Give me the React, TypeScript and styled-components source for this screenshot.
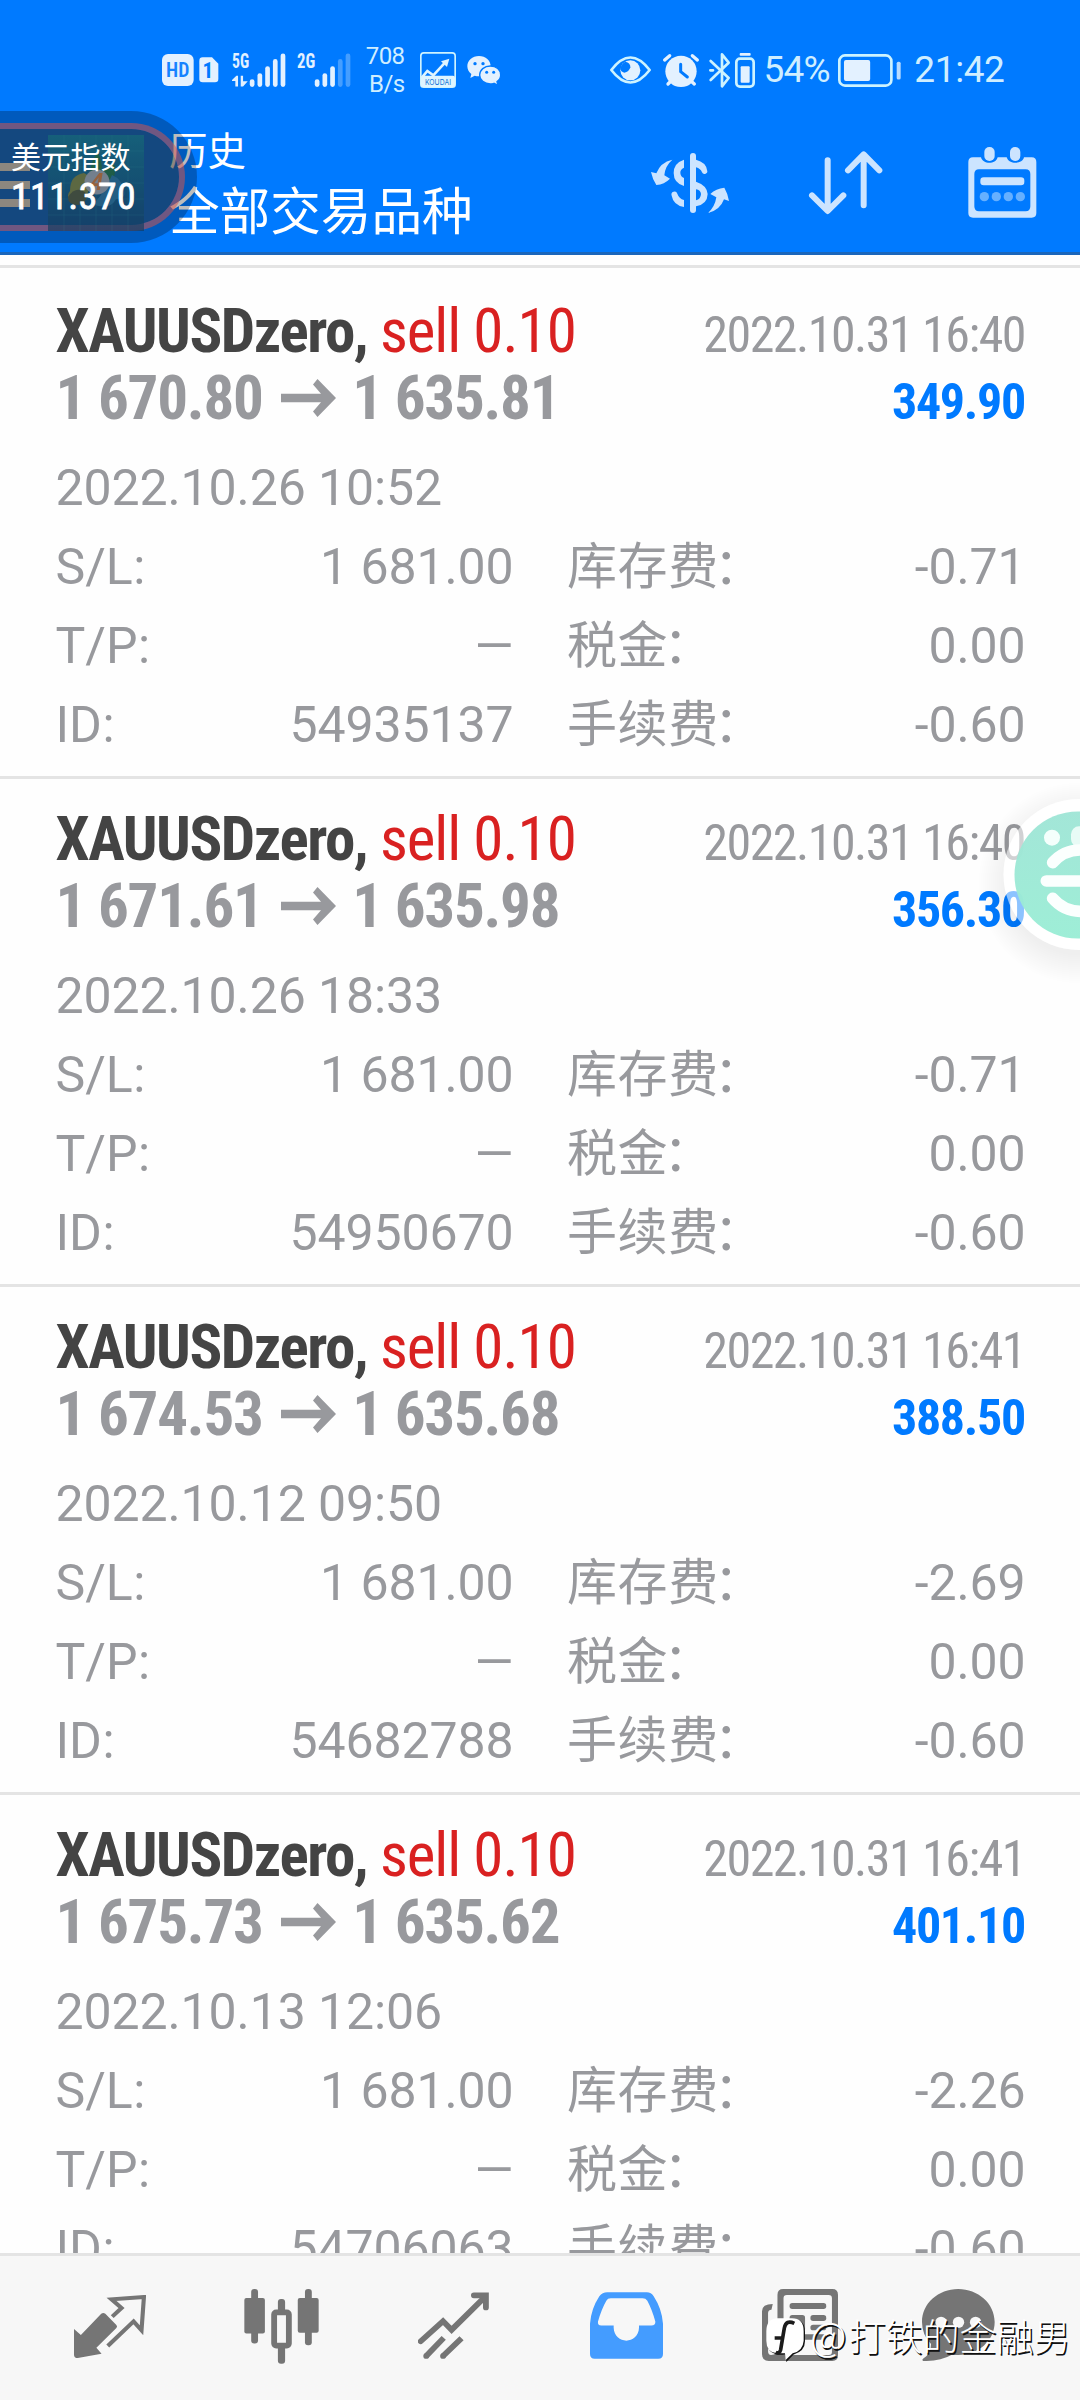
import React from "react";
import styled, { createGlobalStyle } from "styled-components";

const SANS = `Roboto, "Noto Sans CJK SC", sans-serif`;
const CONDENSED = `"Roboto Condensed", Roboto, "Noto Sans CJK SC", sans-serif`;

const GlobalStyle = createGlobalStyle`
  * { box-sizing: border-box; }
  body { margin: 0; background: #fff; }
`;

const Screen = styled.div`
  position: relative;
  display: flex;
  flex-direction: column;
  width: 1080px;
  height: 2400px;
  overflow: hidden;
  background: #fefefe;
  font-family: ${SANS};
`;

/* ---------- header ---------- */

const Header = styled.header`
  flex: none;
  height: 255px;
  background: #007aff;
  border-bottom: 3px solid #1a66bb;
`;

const StatusBar = styled.div`
  display: flex;
  justify-content: space-between;
  height: 111px;
  padding: 30px 75.5px 0 158.5px;
`;

const StatusGroup = styled.div`
  display: flex;
  align-items: center;
  height: 80px;
`;

const Glyph = styled.svg<{ $gap?: number }>`
  display: block;
  flex: none;
  margin-left: ${(p) => p.$gap ?? 0}px;
  overflow: visible;
`;

const NetSpeed = styled.div`
  margin-left: 15px;
  width: 40px;
  text-align: right;
  font-size: 24px;
  line-height: 28.5px;
  color: #cfeeff;
  letter-spacing: -0.6px;
`;

const StatusText = styled.span<{ $gap: number; $spacing?: number }>`
  margin-left: ${(p) => p.$gap}px;
  font-size: 37px;
  line-height: 44px;
  color: #cfeeff;
  letter-spacing: ${(p) => p.$spacing ?? 0}px;
`;

const AppBar = styled.div`
  display: flex;
  height: 141px;
  padding-right: 44px;
`;

const MenuButton = styled.div`
  display: flex;
  flex-direction: column;
  gap: 10px;
  width: 30px;
  padding-top: 52px;
`;

const MenuLine = styled.span`
  height: 8px;
  background: #fff;
`;

const Titles = styled.div`
  flex: 1;
  margin-left: 139px;
  padding-top: 17px;
  color: #fff;
`;

const Subtitle = styled.div`
  font-size: 38.5px;
  line-height: 48px;
`;

const Title = styled.div`
  font-size: 50.6px;
  line-height: 70px;
  margin-top: 2px;
`;

const Actions = styled.div`
  display: flex;
  align-items: center;
  height: 143px;
`;

/* ---------- history list ---------- */

const List = styled.main`
  flex: 1;
  min-height: 0;
  overflow: hidden;
  padding-top: 10px;
`;

const ListTop = styled.div`
  height: 6px;
  border-top: 3px solid #e4e4e4;
`;

const Item = styled.article`
  height: 508px;
  padding: 27px 54px 0 55.5px;
  border-bottom: 3px solid #e4e4e4;
`;

const Line = styled.div`
  display: flex;
  justify-content: space-between;
  align-items: baseline;
  height: 67px;
  line-height: 67px;
  font-family: ${CONDENSED};
`;

const Symbol = styled.div`
  font-size: 61px;
  font-weight: 700;
  letter-spacing: -1.45px;
  color: #444;
  white-space: pre;
`;

const Side = styled.span`
  font-weight: 400;
  letter-spacing: -1px;
  color: #d92121;
`;

const CloseTime = styled.div`
  margin-right: 1px;
  font-size: 50px;
  letter-spacing: -1.5px;
  color: #98999d;
`;

const Prices = styled.div`
  display: flex;
  align-items: baseline;
  font-size: 61px;
  font-weight: 700;
  letter-spacing: -1.2px;
  color: #98999d;
`;

const PriceArrow = styled.svg`
  margin: 0 16px 0 18.5px;
  transform: translateY(-2px);
`;

const Profit = styled.div`
  margin-right: 1px;
  font-size: 50px;
  font-weight: 700;
  letter-spacing: -1.3px;
  color: #007aff;
`;

const Details = styled.div`
  display: grid;
  grid-template-columns: 458px 458.5px;
  column-gap: 53.5px;
  grid-auto-rows: 79px;
  margin-top: 17px;
  font-size: 50px;
  line-height: 79px;
  letter-spacing: -0.1px;
  color: #98999d;
`;

const OpenTime = styled.div`
  grid-column: 1 / -1;
`;

const Field = styled.div`
  display: flex;
  justify-content: space-between;
`;

const Label = styled.span<{ $wide: boolean }>`
  letter-spacing: ${(p) => (p.$wide ? 0.6 : 0)}px;
`;

const Colon = styled.span<{ $wide: boolean }>`
  margin-left: ${(p) => (p.$wide ? -5 : 0.5)}px;
`;

type Deal = {
  id: string; closed: string; opened: string;
  from: string; to: string; profit: string; swap: string;
};

const deals: Deal[] = [
  { id: "54935137", closed: "2022.10.31 16:40", opened: "2022.10.26 10:52", from: "1 670.80", to: "1 635.81", profit: "349.90", swap: "-0.71" },
  { id: "54950670", closed: "2022.10.31 16:40", opened: "2022.10.26 18:33", from: "1 671.61", to: "1 635.98", profit: "356.30", swap: "-0.71" },
  { id: "54682788", closed: "2022.10.31 16:41", opened: "2022.10.12 09:50", from: "1 674.53", to: "1 635.68", profit: "388.50", swap: "-2.69" },
  { id: "54706063", closed: "2022.10.31 16:41", opened: "2022.10.13 12:06", from: "1 675.73", to: "1 635.62", profit: "401.10", swap: "-2.26" },
];

function DealItem({ deal }: { deal: Deal }) {
  const fields = [
    ["S/L", ":", "1 681.00"], ["库存费", "：", deal.swap],
    ["T/P", ":", "—"], ["税金", "：", "0.00"],
    ["ID", ":", deal.id], ["手续费", "：", "-0.60"],
  ];
  return (
    <Item>
      <Line>
        <Symbol>XAUUSDzero, <Side>sell 0.10</Side></Symbol>
        <CloseTime>{deal.closed}</CloseTime>
      </Line>
      <Line>
        <Prices>
          <span>{deal.from}</span>
          <PriceArrow width="55" height="38" viewBox="0 0 55 38">
            <path d="M0 14.8H40L32 5.5L36.5 0L55 19L36.5 38L32 32.5L40 23.2H0Z" fill="#98999d" />
          </PriceArrow>
          <span>{deal.to}</span>
        </Prices>
        <Profit>{deal.profit}</Profit>
      </Line>
      <Details>
        <OpenTime>{deal.opened}</OpenTime>
        {fields.map(([label, colon, value]) => (
          <Field key={label}>
            <Label $wide={colon === "："}>{label}<Colon $wide={colon === "："}>{colon}</Colon></Label>
            <span>{value}</span>
          </Field>
        ))}
      </Details>
    </Item>
  );
}

/* ---------- bottom navigation ---------- */

const NavBar = styled.nav`
  flex: none;
  display: flex;
  align-items: flex-start;
  height: 147px;
  padding: 33px 0 0 74px;
  background: #f7f7f7;
  border-top: 3px solid #e4e4e4;
`;

const NavIcon = styled.svg<{ $gap?: number; $drop?: number }>`
  flex: none;
  margin: ${(p) => p.$drop ?? 0}px 0 0 ${(p) => p.$gap ?? 0}px;
`;

/* ---------- floating widgets ---------- */

const IndexWidget = styled.aside`
  position: absolute;
  left: -70px;
  top: 111px;
  width: 267px;
  height: 132px;
  padding: 12px;
  border-radius: 66px;
  background: rgba(0, 0, 0, 0.26);
`;

const IndexBody = styled.div`
  position: relative;
  height: 108px;
  border: 6px solid rgba(215, 85, 75, 0.52);
  border-radius: 54px;
  background: rgba(55, 40, 19, 0.365);
  background-clip: padding-box;
`;

const AppLogo = styled.svg`
  position: absolute;
  left: 100px;
  top: 6px;
  opacity: 0.8;
`;

const IndexText = styled.div`
  position: relative;
  padding: 12px 0 0 63px;
  color: #fff;
`;

const IndexName = styled.div`
  font-size: 30px;
  line-height: 34px;
  letter-spacing: -0.2px;
  white-space: nowrap;
`;

const IndexValue = styled.div`
  font-family: ${CONDENSED};
  font-size: 37.5px;
  line-height: 42px;
  letter-spacing: 0.6px;
  -webkit-text-stroke: 0.8px #fff;
`;

const Assistant = styled.svg`
  position: absolute;
  left: 975px;
  top: 770px;
`;

const Watermark = styled.div`
  position: absolute;
  left: 766px;
  top: 2318px;
  display: flex;
  align-items: flex-start;
  gap: 4px;
  font-family: "Noto Sans CJK SC", sans-serif;
  font-weight: 300;
  font-size: 37px;
  line-height: 33px;
  color: #fff;
  white-space: nowrap;
  text-shadow: 1.5px 1.5px 0.5px #111;
`;

const At = styled.span`
  display: inline-block;
  width: 38.5px;
  font-size: 40px;
`;

const ICE = "#e3f1ff";
const PALE = "#cce4ff";
const GRAY = "#757575";

function Bars({ x, tops, faded = 0 }: { x: number; tops: number[]; faded?: number }) {
  return (
    <>
      {tops.map((t, i) => (
        <rect key={i} x={x + i * 23} y={t} width="14" height={163 - t} rx="7" fill={ICE}
          opacity={i >= tops.length - faded ? 0.3 : 1} />
      ))}
    </>
  );
}

export default function App() {
  return (
    <Screen>
      <GlobalStyle />
      <Header>
        <StatusBar>
          <StatusGroup>
            <Glyph width="57" height="32" viewBox="65 68 171 96" $gap={3}>
              <rect x="65" y="68" width="95" height="96" rx="18" fill={ICE} />
              <text x="112" y="138" textAnchor="middle" fontFamily="Roboto Condensed" fontWeight="600" fontSize="60" textLength="70" lengthAdjust="spacingAndGlyphs" fill="#1683ff">HD</text>
              <path d="M187 78H215L234 97V143Q234 153 224 153H187Q177 153 177 143V88Q177 78 187 78Z" fill={ICE} />
              <text x="203" y="140" textAnchor="middle" fontFamily="Roboto Condensed" fontWeight="700" fontSize="64" fill="#007aff">1</text>
            </Glyph>
            <Glyph width="53" height="34" viewBox="277 62 158 101" $gap={13}>
              <text x="277" y="107" fontFamily="Roboto Condensed" fontWeight="700" fontSize="60" textLength="51" lengthAdjust="spacingAndGlyphs" fill={ICE}>5G</text>
              <path d="M277 142L290 130H295V162H287V145H277ZM303 130H310V146H324L310 162H303Z" fill={ICE} />
              <Bars x={330} tops={[140, 122, 101, 80, 63]} />
            </Glyph>
            <Glyph width="53" height="34" viewBox="472 62 158 101" $gap={12}>
              <text x="472" y="107" fontFamily="Roboto Condensed" fontWeight="700" fontSize="60" textLength="54" lengthAdjust="spacingAndGlyphs" fill={ICE}>2G</text>
              <Bars x={525} tops={[140, 122, 101, 80, 63]} faded={2} />
            </Glyph>
            <NetSpeed>708<br />B/s</NetSpeed>
            <Glyph width="36" height="36" viewBox="840 60 108 108" $gap={15.5}>
              <rect x="842.5" y="62.5" width="103" height="103" rx="9" fill="none" stroke="#cdf3ff" strokeWidth="5" />
              <rect x="843" y="131" width="102" height="34" rx="6" fill="#dff5ff" />
              <path d="M846 136L862 117L880 130L915 92" fill="none" stroke="#dff5ff" strokeWidth="8" />
              <path d="M928 80L921 105L903 88Z" fill="#dff5ff" />
              <text x="894" y="158" textAnchor="middle" fontFamily="Inter" fontSize="24" textLength="78" lengthAdjust="spacingAndGlyphs" fill="#1475d6">KOUDAI</text>
            </Glyph>
            <Glyph width="34" height="29" viewBox="980 72 102 87" $gap={10.5}>
              <path d="M1016 72C996 72 981 86 981 103C981 113 986 121 993 126L990 138L1003 131Q1009 133 1016 133C1036 133 1051 120 1051 103C1051 86 1036 72 1016 72Z" fill={ICE} />
              <path d="M1050 102C1032 102 1018 114 1018 129C1018 144 1032 156 1050 156Q1056 156 1061 154L1073 160L1070 149C1077 144 1081 137 1081 129C1081 114 1068 102 1050 102Z" fill={ICE} stroke="#007aff" strokeWidth="4" />
              <g fill="#007aff">
                <circle cx="1004" cy="95" r="5" /><circle cx="1028" cy="95" r="5" />
                <circle cx="1039" cy="121" r="4.5" /><circle cx="1060" cy="121" r="4.5" />
              </g>
            </Glyph>
          </StatusGroup>
          <StatusGroup>
            <Glyph width="41" height="28" viewBox="60 75 123 82">
              <path d="M64 116Q121 41 179 116Q121 191 64 116Z" fill="none" stroke="#cdf3ff" strokeWidth="8" strokeLinejoin="round" />
              <circle cx="121" cy="117" r="30" fill={ICE} />
              <path d="M106 91Q122 95 121 108Q117 123 103 124Q92 121 91 113Q93 98 106 91Z" fill="#007aff" />
            </Glyph>
            <Glyph width="36" height="33" viewBox="217 66 108 99" $gap={11.5}>
              <circle cx="271" cy="118" r="47" fill={ICE} />
              <path d="M222 84L237 71M320 84L305 71M232 156L241 147M311 156L301 147" stroke={ICE} strokeWidth="10" strokeLinecap="round" />
              <path d="M270 97V119L290 135" fill="none" stroke="#007aff" strokeWidth="9" strokeLinecap="round" strokeLinejoin="round" />
            </Glyph>
            <Glyph width="22" height="35" viewBox="358 63 64 105" $gap={10}>
              <path d="M362 87L416 138L396 163V67L416 92L362 144M361 115H369" fill="none" stroke="#cdf3ff" strokeWidth="8" strokeLinecap="round" strokeLinejoin="round" />
            </Glyph>
            <Glyph width="20" height="35" viewBox="435 63 60 105" $gap={4}>
              <rect x="449" y="63" width="33" height="8" rx="3" fill={ICE} />
              <rect x="439" y="80" width="52" height="84" rx="11" fill="none" stroke="#cdf3ff" strokeWidth="8" />
              <rect x="452" y="103" width="27" height="49" rx="3" fill={ICE} />
            </Glyph>
            <StatusText $gap={9} $spacing={-0.8}>54%</StatusText>
            <Glyph width="63" height="33" viewBox="747 66 190 99" $gap={8.5}>
              <rect x="751" y="70" width="157" height="91" rx="17" fill="none" stroke="#cdf3ff" strokeWidth="8" />
              <rect x="765" y="84" width="79" height="63" rx="6" fill={ICE} />
              <rect x="924" y="89" width="12" height="54" rx="5" fill="#b8dcff" />
            </Glyph>
            <StatusText $gap={13} $spacing={-0.4}>21:42</StatusText>
          </StatusGroup>
        </StatusBar>
        <AppBar>
          <MenuButton><MenuLine /><MenuLine /><MenuLine /></MenuButton>
          <Titles>
            <Subtitle>历史</Subtitle>
            <Title>全部交易品种</Title>
          </Titles>
          <Actions>
            <Glyph width="78" height="60" viewBox="93 93 234 180">
              <g fill={PALE}>
                <rect x="210" y="93" width="18" height="180" rx="9" />
                <path d="M157 113Q135 132 133 160L150 170Q133 187 109 189Q97 170 93 150L109 154Q121 121 157 113Z" />
                <path d="M264 273Q285 254 289 226L271 216Q288 199 313 197Q324 216 327 237L312 232Q300 265 264 273Z" />
                <path d="M192 113V137Q180 142 181 153Q182 165 192 168V192Q161 183 161 153Q161 123 192 113Z" />
                <path d="M228 113Q258 121 261 144A8 8 0 0 1 246 151Q242 140 228 136Z" />
                <path d="M228 179Q261 190 263 216Q262 247 228 253V235Q242 232 243 216Q242 204 228 202Z" />
                <path d="M155 221A9 9 0 0 1 172 215Q177 230 192 234V255Q160 249 155 221Z" />
              </g>
            </Glyph>
            <Glyph width="74" height="64" viewBox="568 92 222 192" $gap={80}>
              <g fill="none" stroke={PALE} strokeWidth="18" strokeLinecap="round" strokeLinejoin="round">
                <path d="M624 120V270M577 225L624 272L671 225" />
                <path d="M732 255V103M685 150L732 102L779 150" />
              </g>
            </Glyph>
            <Glyph width="68" height="71" viewBox="1043 80 204 213" $gap={85}>
              <path fillRule="evenodd" fill={PALE} d="M1058 111H1082C1086 132 1126 134 1132 111H1159C1166 134 1207 132 1211 111H1234Q1248 111 1248 125V278Q1248 292 1234 292H1058Q1044 292 1044 278V125Q1044 111 1058 111ZM1076 147Q1062 147 1062 161V258Q1062 273 1076 273H1216Q1230 273 1230 258V161Q1230 147 1216 147Z" />
              <rect x="1092" y="80" width="31" height="42" rx="15" fill={PALE} />
              <rect x="1169" y="80" width="31" height="42" rx="15" fill={PALE} />
              <rect x="1080" y="171" width="132" height="24" rx="10" fill={PALE} />
              {[1092, 1128, 1164, 1200].map((cx) => <circle key={cx} cx={cx} cy="229" r="14" fill="#66b0ff" />)}
            </Glyph>
          </Actions>
        </AppBar>
      </Header>

      <List>
        <ListTop />
        {deals.map((deal) => <DealItem key={deal.id} deal={deal} />)}
      </List>

      <NavBar>
        <NavIcon width="72" height="63" viewBox="215 285 209 189" preserveAspectRatio="none" $drop={6}>
          <path d="M215 387L235 405L294 341Q300 337 306 341L338 375Q342 380 338 384L280 443L295 461L226 474Q215 474 215 464Z" fill={GRAY} />
          <path d="M326 350L353 324L324 298L418 291L411 391L388 364L313 438" fill="none" stroke={GRAY} strokeWidth="12" />
        </NavIcon>
        <NavIcon width="75" height="75" viewBox="708 266 219 224" preserveAspectRatio="none" $gap={98}>
          <g fill={GRAY}>
            <rect x="729" y="266" width="20" height="163" rx="9" />
            <rect x="709" y="293" width="60" height="106" rx="6" />
            <rect x="886" y="266" width="20" height="168" rx="9" />
            <rect x="865" y="293" width="61" height="104" rx="6" />
            <rect x="807" y="296" width="21" height="60" rx="9" />
            <rect x="807" y="430" width="21" height="59" rx="9" />
          </g>
          <rect x="796" y="336" width="43" height="99" rx="6" fill="#f7f7f7" stroke={GRAY} strokeWidth="17" />
        </NavIcon>
        <NavIcon width="71" height="67" viewBox="1213 275 207 200" preserveAspectRatio="none" $gap={99} $drop={3}>
          <g fill="none" stroke={GRAY} strokeWidth="17">
            <path d="M1221 422L1286 362L1311 388L1408 290" strokeLinecap="round" />
            <path d="M1376 285H1411V321" strokeLinecap="round" />
            <path d="M1237 466L1288 412M1286 466L1340 413" />
          </g>
          <circle cx="1237" cy="466" r="8.5" fill={GRAY} />
          <circle cx="1286" cy="466" r="8.5" fill={GRAY} />
        </NavIcon>
        <NavIcon width="73" height="67" viewBox="150 155 219 200" preserveAspectRatio="none" $gap={101} $drop={3}>
          <path fillRule="evenodd" fill="#449cff" d="M202 156H320Q334 156 341 168Q366 206 369 250V340Q369 354 355 354H164Q150 354 150 340V250Q153 206 178 168Q187 156 202 156ZM212 174Q203 174 199 181Q184 207 174 243Q172 255 184 255H221V262C223 313 295 313 297 262V255H334Q347 255 346 243Q336 207 322 181Q317 174 308 174Z" />
        </NavIcon>
        <NavIcon width="76" height="72" viewBox="667 147 226 216" preserveAspectRatio="none" $gap={99}>
          <path fillRule="evenodd" fill={GRAY} d="M730 147H876Q893 147 893 164V346Q893 363 876 363H687Q667 363 667 343V214Q667 192 699 192L695 209Q685 209 685 220V334Q685 345 694 345Q713 345 713 328V164Q713 147 730 147ZM741 165Q731 165 731 175V345H866Q875 345 875 336V175Q875 165 865 165Z" />
          <g fill={GRAY}>
            <rect x="749" y="189" width="109" height="18" rx="8" />
            <rect x="749" y="225" width="46" height="48" rx="8" />
            <rect x="811" y="225" width="47" height="18" rx="8" />
            <rect x="811" y="254" width="47" height="17" rx="8" />
            <rect x="749" y="283" width="109" height="16" rx="8" />
          </g>
        </NavIcon>
        <NavIcon width="73" height="72" viewBox="1145 147 218 216" preserveAspectRatio="none" $gap={84}>
          <path d="M1253 147C1312 147 1362 190 1362 246C1362 303 1312 345 1253 345Q1243 345 1234 344Q1200 364 1149 363Q1143 360 1150 355Q1172 340 1172 312Q1145 285 1145 246C1145 190 1194 147 1253 147Z" fill={GRAY} />
          <circle cx="1202" cy="247" r="17" fill="#f7f7f7" />
          <circle cx="1254" cy="247" r="17" fill="#f7f7f7" />
          <circle cx="1305" cy="247" r="17" fill="#f7f7f7" />
        </NavIcon>
      </NavBar>

      <IndexWidget>
        <IndexBody>
          <AppLogo width="96" height="96" viewBox="0 0 96 96">
            <defs>
              <linearGradient id="logoBg" x1="0" y1="0" x2="0" y2="1">
                <stop offset="0" stopColor="#176b78" /><stop offset="1" stopColor="#143c60" />
              </linearGradient>
            </defs>
            <rect width="96" height="96" fill="url(#logoBg)" opacity="0.85" />
            <path d="M16 0V96M32 0V96M48 0V96M64 0V96M80 0V96M0 16H96M0 32H96M0 48H96M0 64H96M0 80H96" stroke="#2b7f8c" strokeWidth="0.6" opacity="0.4" />
            <path d="M42 38Q44 22 50 18Q54 26 54 36Q62 28 67 30Q68 42 62 52L44 48Z" fill="#23642f" opacity="0.85" />
            <path d="M22 56Q22 40 36 38Q42 40 42 50L38 64Q28 72 22 66Q18 60 22 56Z" fill="#6f7033" />
            <path d="M20 62Q28 50 38 58Q40 68 30 70Q20 70 20 62Z" fill="#4a4c30" />
            <path d="M48 66Q56 58 64 40Q74 44 76 56Q78 64 68 64Q64 72 56 71Q48 72 46 68Z" fill="#286484" />
            <circle cx="49" cy="47" r="12.5" fill="#8b8d91" />
            <text x="49" y="55" textAnchor="middle" fontFamily="Roboto" fontWeight="700" fontStyle="italic" fontSize="23" fill="#b5682f">4</text>
          </AppLogo>
          <IndexText>
            <IndexName>美元指数</IndexName>
            <IndexValue>111.370</IndexValue>
          </IndexText>
        </IndexBody>
      </IndexWidget>

      <Assistant width="105" height="220" viewBox="975 770 105 220">
        <defs>
          <radialGradient id="halo">
            <stop offset="0.7" stopColor="#000" stopOpacity="0.06" />
            <stop offset="1" stopColor="#000" stopOpacity="0" />
          </radialGradient>
          <linearGradient id="mint" x1="0" y1="0" x2="0" y2="1">
            <stop offset="0" stopColor="#9fe5d6" /><stop offset="1" stopColor="#9aedd5" />
          </linearGradient>
          <mask id="outside">
            <rect x="975" y="770" width="105" height="220" fill="#fff" />
            <circle cx="1079" cy="874.5" r="75.5" fill="#000" />
          </mask>
        </defs>
        <circle cx="1079" cy="883" r="101" fill="url(#halo)" mask="url(#outside)" />
        <circle cx="1079" cy="874.5" r="75.5" fill="#fff" opacity="0.55" />
        <circle cx="1078" cy="875" r="63.5" fill="url(#mint)" opacity="0.96" />
        <g transform="translate(960 780) scale(0.33333)" stroke="#fbfffe" fill="none" strokeWidth="35" strokeLinecap="round">
          <circle cx="276" cy="173" r="24" fill="#f4fffc" stroke="none" />
          <rect x="333" y="139" width="50" height="62" rx="24" fill="#e8fbf6" stroke="none" />
          <path d="M278 248Q312 209 365 210" />
          <path d="M259 303H375" />
          <path d="M278 355Q312 395 365 394" />
        </g>
      </Assistant>

      <Watermark>
        <svg width="40" height="44" viewBox="680 240 120 132">
          <path d="M716 243H760Q797 243 797 282V310Q797 340 762 350L741 372L739 350H716Q683 345 683 310V282Q683 246 716 243Z" fill="#111" />
          <path d="M712 241H758Q793 241 793 280V308Q791 338 760 346L739 366L737 346H712Q681 342 681 308V280Q681 244 712 241Z" fill="#fff" />
          <path d="M765 256Q740 244 735 270L724 335Q720 349 709 343M706 300H734" fill="none" stroke="#1b1b1b" strokeWidth="11" />
        </svg>
        <span><At>@</At>打铁的金融男</span>
      </Watermark>
    </Screen>
  );
}
